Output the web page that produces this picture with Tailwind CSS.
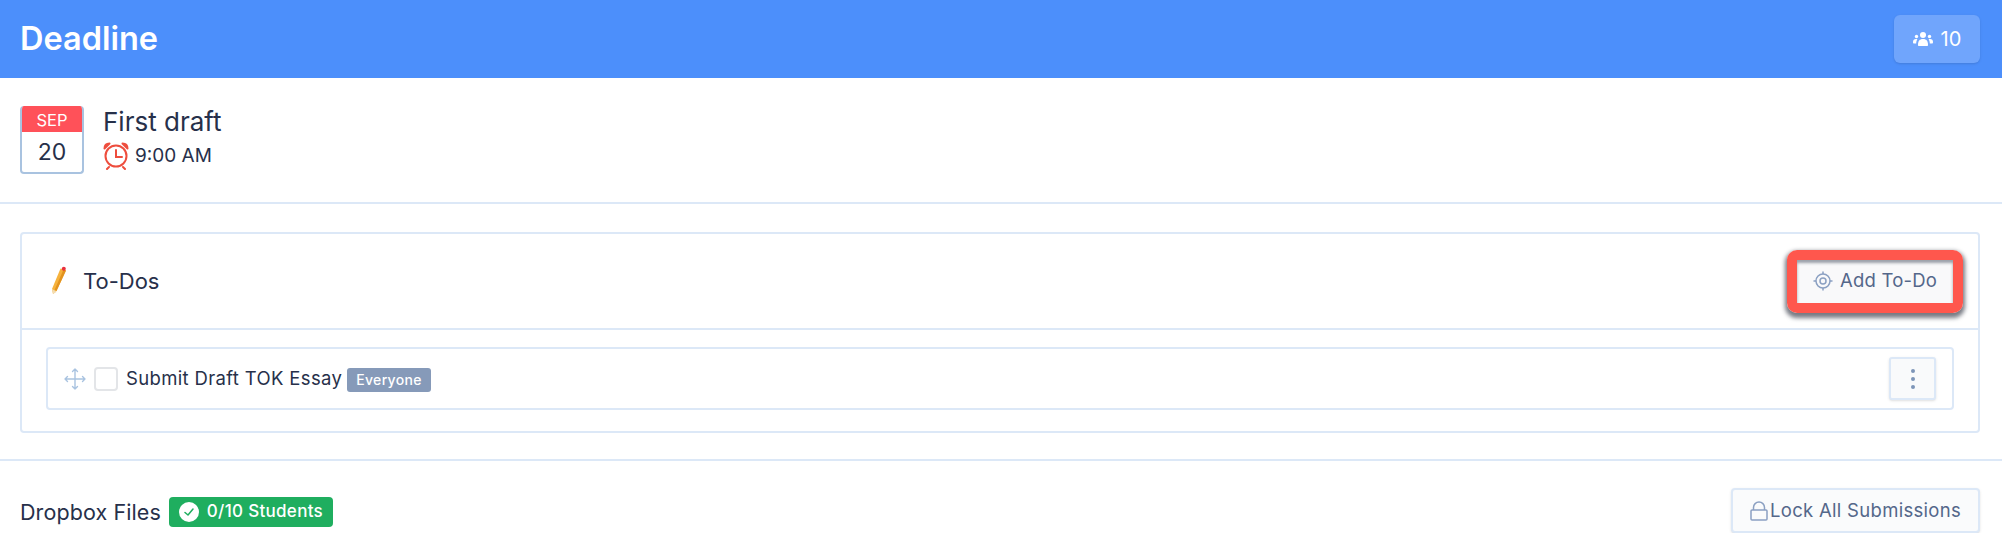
<!DOCTYPE html>
<html lang="en">
  <head>
    <meta charset="UTF-8" />
    <title>Deadline</title>
    <script src="https://cdn.jsdelivr.net/npm/@tailwindcss/browser@4"></script>
  </head>
  <body class="bg-white font-['Inter',sans-serif] text-[#27304a] overflow-hidden">
    <!-- Header -->
    <header class="h-[78px] bg-[#4c8ffb] flex items-center justify-between pl-5 pr-[22px]">
      <h1 class="text-[32.500px] font-semibold text-white">Deadline</h1>
      <button class="w-[86px] h-[48px] rounded-md bg-[#70a5fc] shadow-sm text-white text-[20px] flex items-center justify-center gap-2">
        <svg class="w-5 h-4" viewBox="0 0 20 16" fill="#fff">
          <circle cx="10" cy="4" r="3" />
          <path d="M5 14c0-4 1.500-6 5-6s5 2 5 6c0 .6-.4 1-1 1H6c-.6 0-1-.4-1-1z" />
          <circle cx="3.500" cy="5.500" r="1.700" />
          <circle cx="16.500" cy="5.500" r="1.700" />
          <path d="M0 11c0-2 1-3 3-3 .6 0 1 .1 1.400.3C3.500 9.500 3.300 11 3.200 12.500H1c-.6 0-1-.5-1-1.500zM20 11c0-2-1-3-3-3-.6 0-1 .1-1.400.3.900 1.200 1.100 2.700 1.200 4.200H19c.6 0 1-.5 1-1.500z" />
        </svg>
        10
      </button>
    </header>

    <!-- Deadline info -->
    <section class="h-[126px] border-b-2 border-[#dce8f7] pl-5 pt-[28px] flex gap-[19px]">
      <div class="w-16 h-[68px] rounded-[4px] border-2 border-t-0 border-[#a9c3e0] overflow-hidden">
        <div class="h-[26px] -mx-[2px] bg-[#ff5159] text-white text-[16.500px] leading-[28px] text-center">SEP</div>
        <div class="text-[23px] leading-[41px] text-center">20</div>
      </div>
      <div class="pt-[1px]">
        <div class="text-[26px] leading-[30px]">First draft</div>
        <div class="flex items-center gap-[6px] text-[19px] leading-[26px] mt-[5px]">
          <svg class="w-[26px] h-[28px]" viewBox="0 0 26 28" fill="none" stroke="#ee4d3d" stroke-width="2" stroke-linecap="round">
            <circle cx="13" cy="14" r="10.500" />
            <path d="M13 8v7h6M6 25l-2 2M20 25l2 2" />
            <path d="M1.500 6.500c0-3 2-5 5-5zM24.500 6.500c0-3-2-5-5-5z" stroke-linejoin="round" />
          </svg>
          <span>9:00 AM</span>
        </div>
      </div>
    </section>

    <!-- To-Dos -->
    <section class="h-[257px] border-b-2 border-[#dce8f7] pl-5 pr-[22px] pt-[28px]">
      <div class="h-[201px] rounded-[4px] border-2 border-[#dce8f7]">
        <div class="h-[96px] border-b-2 border-[#dce8f7] flex items-center justify-between pl-[29px] pr-[15px]">
          <div class="flex items-center gap-4 text-[22px]">
            <svg class="w-[16px] h-[30px]" viewBox="0 0 16 30">
              <path d="M9.500 2.500 15 4.500 5.500 25 2 28l-1-5z" fill="#f6b23c" />
              <path d="M12.500 3.500 15 4.500 5.500 25l-1.800-1.200z" fill="#e2931f" />
              <path d="M2 28l-1-5 1.800.9 1 .7 1.700 1.400z" fill="#f3dcb0" />
              <circle cx="12.800" cy="2.800" r="2" fill="#e9303c" />
            </svg>
            <span>To-Dos</span>
          </div>
          <!-- Red callout around the button -->
          <div class="rounded-[10px] border-[10px] border-[#ff574d] shadow-[0_3px_4px_2px_rgba(30,35,50,0.6)]">
            <button class="w-[156px] h-[43px] bg-[#f9f9fa] text-[#54678a] text-[18.500px] tracking-[0.2px] flex items-center justify-center gap-[7px] shadow-[inset_0_3px_3px_rgba(40,50,70,0.45)]">
              <svg class="w-5 h-5" viewBox="0 0 20 20" fill="none" stroke="#8ba0c2" stroke-width="1.500">
                <circle cx="10" cy="10" r="7" />
                <circle cx="10" cy="10" r="3" />
                <path d="M10 0.500v2.500M10 17v2.500M0.500 10H3M17 10h2.500" />
              </svg>
              Add To-Do
            </button>
          </div>
        </div>
        <div class="pl-6 pr-[24px] pt-[17px]">
          <div class="h-[63px] rounded-[4px] border-2 border-[#dce8f7] flex items-center justify-between pl-[16px] pr-[16px]">
            <div class="flex items-center">
              <svg class="w-[22px] h-[22px]" viewBox="0 0 22 22" fill="none" stroke="#a9c3e0" stroke-width="1.400" stroke-linecap="round" stroke-linejoin="round">
                <path d="M11 1v20M1 11h20M8.500 3.500 11 1l2.500 2.500M8.500 18.500 11 21l2.500-2.500M3.500 8.500 1 11l2.500 2.500M18.500 8.500 21 11l-2.500 2.500" />
              </svg>
              <span class="w-6 h-6 ml-[8px] rounded-[4px] border-2 border-[#e3e5e8] bg-white"></span>
              <span class="ml-[8px] text-[18.500px] tracking-[0.35px]">Submit Draft TOK Essay</span>
              <span class="ml-[5px] mt-[2px] h-6 px-[9px] rounded-[3px] bg-[#869ab9] text-white text-[14px] tracking-[0.3px] leading-6 font-medium">Everyone</span>
            </div>
            <button class="w-[47px] h-[43px] rounded-[3px] border-2 border-[#dce8f7] bg-[#f9fafb] shadow-sm flex flex-col items-center justify-center gap-[4px]">
              <span class="w-1 h-1 rounded-full bg-[#7e95b8]"></span>
              <span class="w-1 h-1 rounded-full bg-[#7e95b8]"></span>
              <span class="w-1 h-1 rounded-full bg-[#7e95b8]"></span>
            </button>
          </div>
        </div>
      </div>
    </section>

    <!-- Dropbox files -->
    <section class="flex items-start justify-between pl-5 pr-[22px] pt-[27px]">
      <div class="flex items-center gap-[8px] mt-[8px]">
        <span class="text-[21.500px] tracking-[0.1px]">Dropbox Files</span>
        <span class="h-[30px] w-[164px] rounded-[4px] bg-[#1fae5f] text-white text-[17px] tracking-[0.3px] font-medium flex items-center justify-center gap-2">
          <svg class="w-5 h-5" viewBox="0 0 20 20">
            <circle cx="10" cy="10" r="10" fill="#fff" />
            <path d="M6 10.500 9 13l5-6" fill="none" stroke="#1fae5f" stroke-width="1.500" stroke-linecap="round" stroke-linejoin="round" />
          </svg>
          0/10 Students
        </span>
      </div>
      <button class="w-[249px] h-[45px] rounded-[4px] border-2 border-[#dce8f7] bg-[#fafbfc] shadow-sm text-[#54678a] text-[18.500px] tracking-[0.3px] flex items-center justify-center gap-[2px]">
        <svg class="w-[18px] h-5" viewBox="0 0 18 20" fill="none" stroke="#8ba0c2" stroke-width="1.500">
          <rect x="1" y="9" width="16" height="10" rx="1" />
          <path d="M3.500 9V6.500a5.500 5.500 0 0 1 11 0V9" />
        </svg>
        Lock All Submissions
      </button>
    </section>
  </body>
</html>
